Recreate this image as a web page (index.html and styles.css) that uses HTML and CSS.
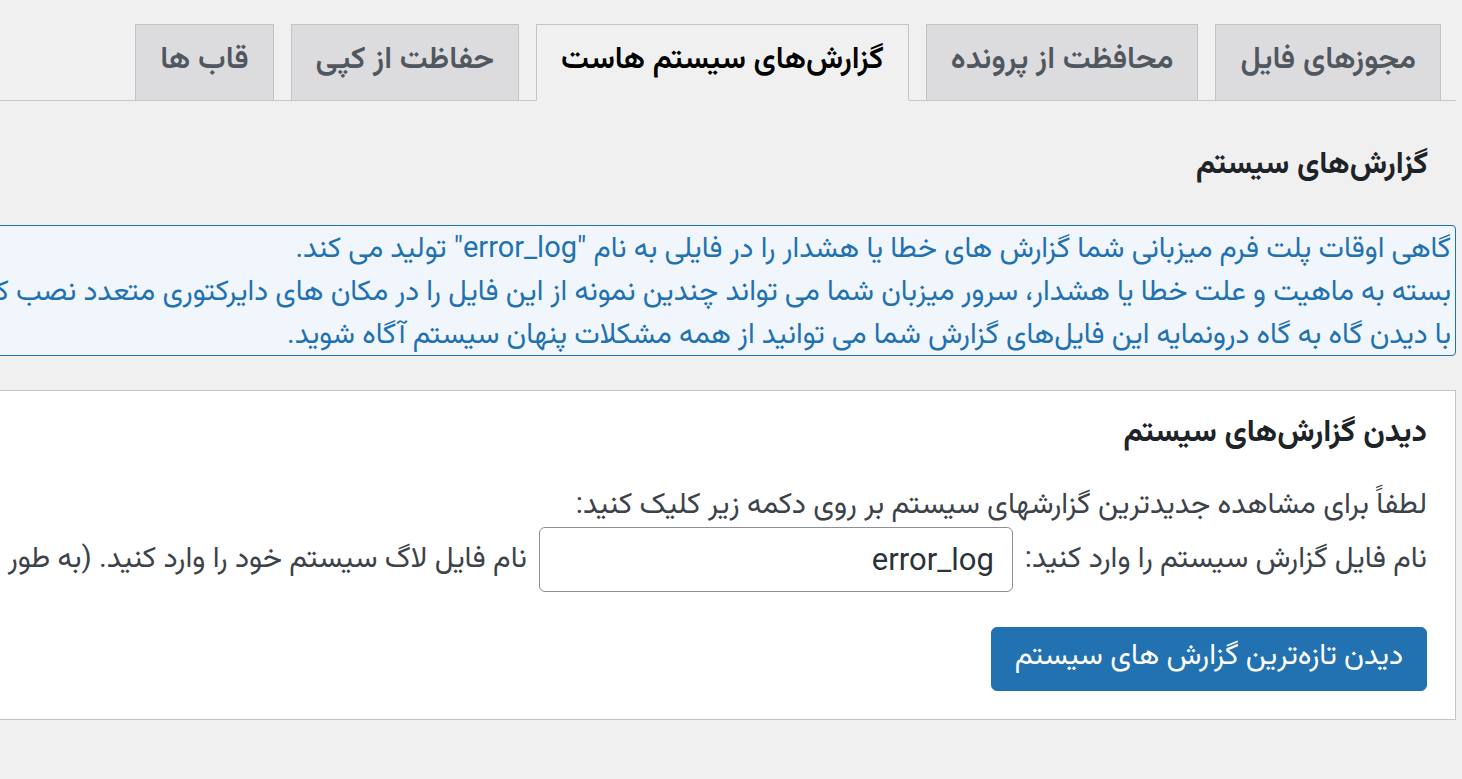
FILE: index.html
```html
<!DOCTYPE html>
<html lang="fa" dir="rtl">
<head>
<meta charset="utf-8">
<title>گزارش‌های سیستم هاست</title>
<link rel="stylesheet" href="styles.css">
</head>
<body>
<div class="wrap">
  <nav class="tabs">
    <a class="tab">مجوزهای فایل</a>
    <a class="tab">محافظت از پرونده</a>
    <a class="tab active">گزارش‌های سیستم هاست</a>
    <a class="tab">حفاظت از کپی</a>
    <a class="tab">قاب ها</a>
  </nav>

  <h2 class="title">گزارش‌های سیستم</h2>

  <div class="notice">
    <p>گاهی اوقات پلت فرم میزبانی شما گزارش های خطا یا هشدار را در فایلی به نام "error_log" تولید می کند.<br>بسته به ماهیت و علت خطا یا هشدار، سرور میزبان شما می تواند چندین نمونه از این فایل را در مکان های دایرکتوری متعدد نصب کند.<br>با دیدن گاه به گاه درونمایه این فایل‌های گزارش شما می توانید از همه مشکلات پنهان سیستم آگاه شوید.</p>
  </div>

  <div class="card">
    <h3 class="card-title">دیدن گزارش‌های سیستم</h3>
    <p class="lead">لطفاً برای مشاهده جدیدترین گزارشهای سیستم بر روی دکمه زیر کلیک کنید:</p>
    <div class="field">
      <label class="label" for="logname">نام فایل گزارش سیستم را وارد کنید:</label>
      <input id="logname" class="input" type="text" value="error_log" dir="ltr">
      <span class="hint">نام فایل لاگ سیستم خود را وارد کنید. (به طور</span>
    </div>
    <button class="button" type="button">دیدن تازه‌ترین گزارش های سیستم</button>
  </div>
</div>
</body>
</html>
```

FILE: styles.css
```css
html, body {
  margin: 0;
  padding: 0;
  overflow: hidden;
}
body {
  background: #f0f0f1;
  font-family: Roboto, "Vazirmatn", "Noto Sans Arabic", "DejaVu Sans", sans-serif;
  color: #3c434a;
  height: 779px;
}
.wrap {
  width: 2400px;
  margin-right: 6px;
}
.tabs {
  display: flex;
  gap: 17px;
  margin-top: 24px;
  padding-right: 15px;
  border-bottom: 1px solid #c3c4c7;
  height: 76px;
  align-items: stretch;
}
.tab {
  display: flex;
  align-items: center;
  padding: 0 24px 4px;
  background: #dcdcde;
  border: 1px solid #c3c4c7;
  margin-bottom: -1px;
  font-size: 31px;
  font-weight: 600;
  color: #50575e;
  white-space: nowrap;
}
.tab.active {
  background: #f0f0f1;
  border-bottom-color: #f0f0f1;
  color: #000;
}
.title {
  margin: 0;
  padding: 40px 28px 0 0;
  height: 85px;
  box-sizing: border-box;
  font-size: 31px;
  font-weight: 700;
  line-height: 44px;
  color: #1d2327;
}
.notice {
  margin-top: 39px;
  background: #f0f6fc;
  border: 1px solid #2271b1;
  border-radius: 4px;
  color: #2271b1;
}
.notice p {
  margin: 0;
  padding: 0 4px;
  font-size: 29px;
  line-height: 43px;
  white-space: nowrap;
}
.card {
  margin-top: 34px;
  background: #fff;
  border: 1px solid #c3c4c7;
  padding: 18px 28px 28px 0;
}
.card-title {
  margin: 0;
  font-size: 31px;
  font-weight: 700;
  line-height: 44px;
  color: #1d2327;
}
.lead {
  margin: 30px 0 4px;
  font-size: 29.5px;
  line-height: 40px;
  white-space: nowrap;
}
.field {
  display: flex;
  align-items: center;
  gap: 12px;
  height: 65px;
  white-space: nowrap;
  font-size: 29.5px;
}
.input {
  width: 474px;
  height: 65px;
  box-sizing: border-box;
  border: 1px solid #8c8f94;
  border-radius: 6px;
  padding: 0 18px;
  font-family: Roboto, sans-serif;
  font-size: 31px;
  color: #2c3338;
  text-align: right;
  background: #fff;
}
.button {
  margin-top: 35px;
  height: 64px;
  padding: 0 23px 4px;
  background: #2271b1;
  border: 1px solid #2271b1;
  border-radius: 6px;
  color: #fff;
  font-family: inherit;
  font-size: 29.5px;
  cursor: pointer;
}
```
